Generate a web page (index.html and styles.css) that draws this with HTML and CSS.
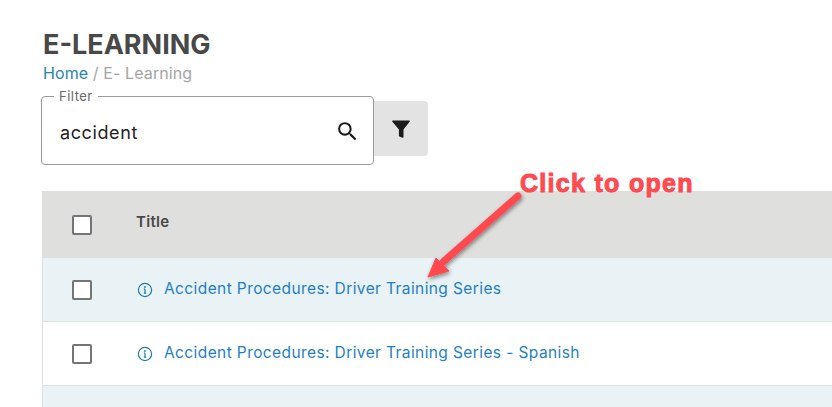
FILE: index.html
```html
<!DOCTYPE html>
<html lang="en">
<head>
  <meta charset="UTF-8" />
  <meta name="viewport" content="width=device-width, initial-scale=1.0"/>
  <title>E-Learning</title>
  <link rel="stylesheet" href="styles.css">
</head>
<body>

  <main class="page">
    <!-- Page Header -->
    <h1>E-LEARNING</h1>
    <p class="crumbs"><a href="#">Home</a> / E- Learning</p>

    <!-- Filter -->
    <div class="filters">
      <fieldset class="filter-box">
        <legend>Filter</legend>
        <span class="filter-value">accident</span>
        <svg class="search-icon" width="25" height="25" viewBox="0 0 24 24" aria-hidden="true">
          <path d="M15.5 14h-.79l-.28-.27A6.47 6.47 0 0 0 16 9.5 6.5 6.5 0 1 0 9.5 16c1.61 0 3.09-.59 4.23-1.57l.27.28v.79l5 4.99L20.49 19l-4.99-5zm-6 0C7.01 14 5 11.99 5 9.5S7.01 5 9.5 5 14 7.01 14 9.5 11.99 14 9.5 14z"/>
        </svg>
      </fieldset>
      <button class="filter-button" aria-label="Filter">
        <svg width="24" height="24" viewBox="0 0 24 24" aria-hidden="true">
          <path d="M3.2 4.6C3 4 3.4 3.5 4 3.5h16c.6 0 1 .5.8 1.1L14.5 12.6V20c0 .6-.5 1-1 .8l-3-1.2c-.4-.1-.6-.5-.6-.9v-6.1z"/>
        </svg>
      </button>
    </div>

    <!-- Results Table -->
    <div class="results">
      <div class="row head">
        <span class="check"></span>
        <span class="title-col">Title</span>
      </div>
      <div class="row tint">
        <span class="check"></span>
        <svg class="info-icon" width="16" height="16" viewBox="0 0 16 16" aria-hidden="true">
          <circle cx="8" cy="8" r="6.6"/>
          <path d="M8 7.2v4M6.8 11.2h2.4M6.8 7.2H8"/>
          <circle class="dot" cx="8" cy="5" r="0.9"/>
        </svg>
        <a href="#">Accident Procedures: Driver Training Series</a>
      </div>
      <div class="row">
        <span class="check"></span>
        <svg class="info-icon" width="16" height="16" viewBox="0 0 16 16" aria-hidden="true">
          <circle cx="8" cy="8" r="6.6"/>
          <path d="M8 7.2v4M6.8 11.2h2.4M6.8 7.2H8"/>
          <circle class="dot" cx="8" cy="5" r="0.9"/>
        </svg>
        <a href="#">Accident Procedures: Driver Training Series - Spanish</a>
      </div>
      <div class="row tint"></div>
    </div>
  </main>

  <!-- Screenshot annotation -->
  <span class="callout">Click to open</span>
  <svg class="arrow" width="832" height="407" viewBox="0 0 832 407" aria-hidden="true">
    <defs>
      <filter id="arrow-shadow" x="-30%" y="-30%" width="160%" height="160%">
        <feDropShadow dx="1" dy="2" stdDeviation="2" flood-color="#000" flood-opacity="0.45"/>
      </filter>
    </defs>
    <g filter="url(#arrow-shadow)">
      <path d="M518 196L443 262" stroke="#ff4a50" stroke-width="7" stroke-linecap="round" fill="none"/>
      <path d="M428 277L436 258L449 271Z" fill="#ff4a50" stroke="#ff4a50" stroke-width="1" stroke-linejoin="round"/>
    </g>
  </svg>

</body>
</html>
```

FILE: styles.css
```css
html, body {
  height: 100%;
}

body {
  margin: 0;
  background: white;
  color: #484848;
  font-family: Inter, 'Noto Sans', sans-serif;
  overflow: hidden;
}

.page {
  height: 407px;
  overflow: hidden;
  padding: 29px 0 0 42px;
  box-sizing: border-box;
}

h1 {
  margin: 0 0 0 1px;
  font-size: 27px;
  line-height: 32px;
  font-weight: 700;
  color: #484848;
}

.crumbs {
  margin: 3px 0 0 1px;
  font-size: 16px;
  line-height: 18px;
  letter-spacing: 0.1px;
  color: #a5a5a5;
}

.crumbs a {
  color: #2a86a8;
  text-decoration: none;
}

/* Filter */
.filters {
  display: flex;
  align-items: flex-start;
  margin: 7px 0 0 -1px;
}

.filter-box {
  box-sizing: border-box;
  display: flex;
  align-items: center;
  justify-content: space-between;
  width: 333px;
  height: 76px;
  margin: 0;
  padding: 0 14px 0 18px;
  border: 1px solid #9a9a9a;
  border-radius: 4px;
}

.filter-box legend {
  margin-left: -6px;
  padding: 0 5px;
  font-size: 13px;
  line-height: 14px;
  letter-spacing: 0.5px;
  color: #666;
}

.filter-value {
  font-size: 18px;
  letter-spacing: 0.6px;
  color: #222;
  margin-top: -2px;
}

.search-icon {
  fill: #1c1c1c;
  margin: -5px 0 0;
  transform: translateX(1px);
}

.filter-button {
  display: flex;
  align-items: center;
  justify-content: center;
  width: 54px;
  height: 55px;
  margin-top: 12px;
  padding: 0;
  border: none;
  border-radius: 0 4px 4px 0;
  background: #e3e3e3;
}

.filter-button svg {
  fill: #1c1c1c;
}

/* Results */
.results {
  width: 900px;
  margin-top: 26px;
  border-left: 1px solid #e0e0e0;
}

.row {
  display: flex;
  align-items: center;
  box-sizing: border-box;
  height: 64px;
  padding-left: 29px;
  border-bottom: 1px solid #e0e0e0;
  background: white;
  font-size: 15.5px;
  letter-spacing: 0.4px;
}

.row a {
  color: #1f7fc4;
  text-decoration: none;
  margin-left: 11px;
  margin-top: -2px;
}

.head {
  height: 67px;
  background: #dfdfdd;
  border-bottom: none;
}

.tint {
  background: #e9f2f5;
}

.check {
  box-sizing: border-box;
  width: 20px;
  height: 20px;
  border: 2px solid #757575;
  border-radius: 2px;
  background: white;
}

.title-col {
  margin: -6px 0 0 44px;
  font-size: 15px;
  letter-spacing: 0.3px;
  font-weight: 600;
  color: #484848;
}

.info-icon {
  margin-left: 45px;
  fill: none;
  stroke: #1f7ea8;
  stroke-width: 1.2;
}

.info-icon .dot {
  fill: #1f7ea8;
  stroke: none;
}

/* Annotation */
.callout {
  position: absolute;
  left: 520px;
  top: 169px;
  font-family: 'Liberation Sans', Arial, sans-serif;
  font-size: 25px;
  line-height: 28px;
  font-weight: 700;
  letter-spacing: 1.3px;
  color: #ff4a50;
  -webkit-text-stroke: 1px #ff4a50;
}

.arrow {
  position: absolute;
  left: 0;
  top: 0;
  pointer-events: none;
}
```
